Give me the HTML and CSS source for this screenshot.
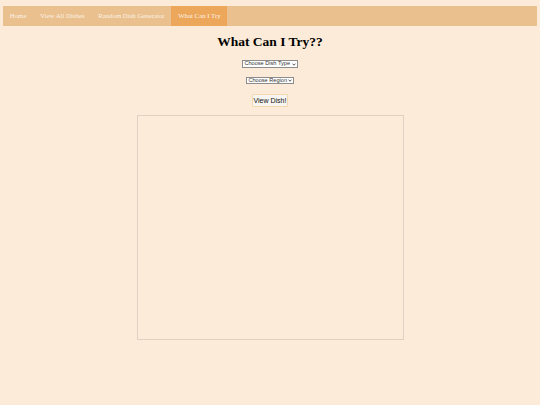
FILE: index.html
```html
<!DOCTYPE html>
<html lang="en">
<head>
<meta charset="utf-8">
<title>What Can I Try??</title>
<link rel="stylesheet" href="styles.css">
</head>
<body>
<nav class="topnav">
  <a href="#" class="nav-link">Home</a>
  <a href="#" class="nav-link">View All Dishes</a>
  <a href="#" class="nav-link">Random Dish Generator</a>
  <a href="#" class="nav-link active">What Can I Try</a>
</nav>
<main class="content">
  <h1 class="title">What Can I Try??</h1>
  <select class="picker picker-type">
    <option>Choose Dish Type</option>
  </select>
  <select class="picker picker-region">
    <option>Choose Region</option>
  </select>
  <button class="view-btn" type="button">View Dish!</button>
  <div class="result-frame"></div>
</main>
</body>
</html>
```
FILE: styles.css
```css
html, body {
  margin: 0;
  background: #fcebd8;
}
body {
  padding: 6px 3px 0;
  font-family: "Liberation Serif", "Times New Roman", serif;
}
.topnav {
  display: flex;
  height: 20px;
  background: #eac08e;
}
.nav-link {
  display: block;
  padding: 0 6.8px;
  line-height: 20px;
  font-size: 6.8px;
  font-weight: normal;
  color: #fbf1e4;
  text-decoration: none;
}
.nav-link.active {
  background: #eca75b;
}
.content {
  display: flex;
  flex-direction: column;
  align-items: center;
}
.title {
  margin: 7.7px 0 0;
  font-size: 13.5px;
  line-height: 16px;
  font-weight: bold;
  color: #000;
}
.picker {
  appearance: none;
  -webkit-appearance: none;
  box-sizing: border-box;
  height: 7.5px;
  margin: 0;
  padding: 0 4.5px 0 1.2px;
  border: 0.8px solid #8c8c8c;
  border-radius: 0;
  background-color: #fff;
  background-image: url("data:image/svg+xml;utf8,<svg xmlns='http://www.w3.org/2000/svg' width='6' height='4' viewBox='0 0 6 4'><path d='M0.8 0.8 L3 3 L5.2 0.8' fill='none' stroke='%23222' stroke-width='1.1'/></svg>");
  background-repeat: no-repeat;
  background-position: right 0.8px center;
  background-size: 3.6px 2.6px;
  font-family: "Liberation Sans", Arial, sans-serif;
  font-size: 5.6px;
  line-height: 5.5px;
  color: #333;
}
.picker-type {
  width: 55.5px;
  margin-top: 10.4px;
}
.picker-region {
  width: 47.5px;
  margin-top: 9px;
}
.view-btn {
  box-sizing: border-box;
  width: 36px;
  height: 13px;
  margin-top: 9.5px;
  padding: 0;
  border: 1.3px solid #f4d8b0;
  border-radius: 1px;
  background: #f8f5f0;
  font-family: "Liberation Sans", Arial, sans-serif;
  font-size: 7px;
  color: #111;
}
.result-frame {
  box-sizing: border-box;
  width: 267px;
  height: 225px;
  margin-top: 8.5px;
  border: 1.2px solid #e2d0c5;
}
```
